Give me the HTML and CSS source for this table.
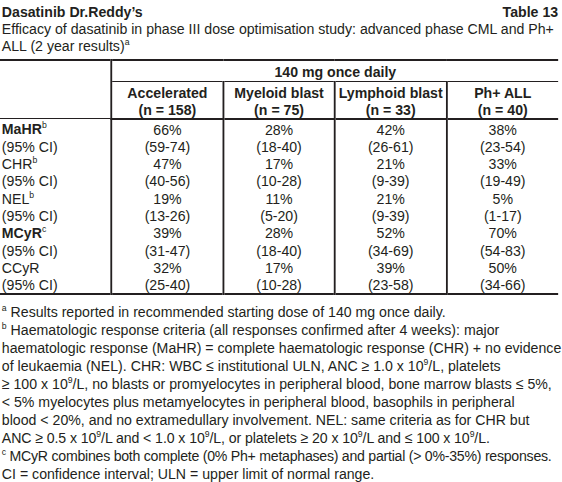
FILE: index.html
```html
<!DOCTYPE html>
<html>

<head>
	<title>Dasatinib Dr.Reddy's - Table 13</title>
	<meta charset="utf-8" />
	<link rel="stylesheet" href="styles.css">
</head>

<body>
	<div class="sheet">
		<div class="caption">
			<div class="caption-top">
				<span class="brand">Dasatinib Dr.Reddy’s</span>
				<span class="table-no">Table 13</span>
			</div>
			<p>Efficacy of dasatinib in phase III dose optimisation study: advanced phase CML and Ph+<br>ALL (2 year results)<sup>a</sup></p>
		</div>
		<table class="results">
			<thead>
				<tr class="dose-row">
					<th class="blank" rowspan="2"></th>
					<th colspan="4">140 mg once daily</th>
				</tr>
				<tr class="group-row">
					<th>Accelerated<br>(n = 158)</th>
					<th>Myeloid blast<br>(n = 75)</th>
					<th>Lymphoid blast<br>(n = 33)</th>
					<th>Ph+ ALL<br>(n = 40)</th>
				</tr>
			</thead>
			<tbody>
				<tr class="first">
					<td class="name"><b>MaHR</b><sup>b</sup></td>
					<td>66%</td>
					<td>28%</td>
					<td>42%</td>
					<td>38%</td>
				</tr>
				<tr>
					<td class="name">(95% CI)</td>
					<td>(59-74)</td>
					<td>(18-40)</td>
					<td>(26-61)</td>
					<td>(23-54)</td>
				</tr>
				<tr>
					<td class="name">CHR<sup>b</sup></td>
					<td>47%</td>
					<td>17%</td>
					<td>21%</td>
					<td>33%</td>
				</tr>
				<tr>
					<td class="name">(95% CI)</td>
					<td>(40-56)</td>
					<td>(10-28)</td>
					<td>(9-39)</td>
					<td>(19-49)</td>
				</tr>
				<tr>
					<td class="name">NEL<sup>b</sup></td>
					<td>19%</td>
					<td>11%</td>
					<td>21%</td>
					<td>5%</td>
				</tr>
				<tr>
					<td class="name">(95% CI)</td>
					<td>(13-26)</td>
					<td>(5-20)</td>
					<td>(9-39)</td>
					<td>(1-17)</td>
				</tr>
				<tr>
					<td class="name"><b>MCyR</b><sup>c</sup></td>
					<td>39%</td>
					<td>28%</td>
					<td>52%</td>
					<td>70%</td>
				</tr>
				<tr>
					<td class="name">(95% CI)</td>
					<td>(31-47)</td>
					<td>(18-40)</td>
					<td>(34-69)</td>
					<td>(54-83)</td>
				</tr>
				<tr>
					<td class="name">CCyR</td>
					<td>32%</td>
					<td>17%</td>
					<td>39%</td>
					<td>50%</td>
				</tr>
				<tr class="last">
					<td class="name">(95% CI)</td>
					<td>(25-40)</td>
					<td>(10-28)</td>
					<td>(23-58)</td>
					<td>(34-66)</td>
				</tr>
			</tbody>
		</table>
		<div class="notes">
			<p><sup>a</sup> Results reported in recommended starting dose of 140 mg once daily.</p>
			<p><sup>b</sup> Haematologic response criteria (all responses confirmed after 4 weeks): major<br>
				haematologic response (MaHR) = complete haematologic response (CHR) + no evidence<br>
				of leukaemia (NEL). CHR: WBC ≤ institutional ULN, ANC ≥ 1.0 x 10<sup>9</sup>/L, platelets<br>
				≥ 100 x 10<sup>9</sup>/L, no blasts or promyelocytes in peripheral blood, bone marrow blasts ≤ 5%,<br>
				&lt; 5% myelocytes plus metamyelocytes in peripheral blood, basophils in peripheral<br>
				blood &lt; 20%, and no extramedullary involvement. NEL: same criteria as for CHR but<br>
				<span class="tight">ANC ≥ 0.5 x 10<sup>9</sup>/L and &lt; 1.0 x 10<sup>9</sup>/L, or platelets ≥ 20 x 10<sup>9</sup>/L and ≤ 100 x 10<sup>9</sup>/L.</span></p>
			<p class="tighter"><sup>c</sup> MCyR combines both complete (0% Ph+ metaphases) and partial (&gt; 0%-35%) responses.</p>
			<p>CI = confidence interval; ULN = upper limit of normal range.</p>
		</div>
	</div>
</body>

</html>
```

FILE: styles.css
```css
/* general styles */
html,
body {
	overflow: hidden;
}

body {
	margin: 0;
	background: #fff;
	color: #231f20;
	font-family: "Liberation Sans", Arial, sans-serif;
	font-size: 15.5px;
}

* {
	box-sizing: border-box;
}

p {
	margin: 0;
}

sup {
	font-size: 9.5px;
	line-height: 0;
	vertical-align: 6px;
}

/* the print face is a condensed grotesque: narrow the whole sheet */
.sheet {
	width: 612px;
	transform: scaleX(0.912);
	transform-origin: 0 0;
}

/* caption */
.caption {
	padding: 3px 0 0 2px;
	line-height: 17px;
	margin-bottom: 5px;
}

.caption-top {
	display: flex;
	justify-content: space-between;
	font-weight: bold;
}

/* table */
.results {
	width: 100%;
	border-collapse: collapse;
	table-layout: fixed;
	border-top: 2px solid #231f20;
	border-bottom: 2px solid #231f20;
}

.results th,
.results td {
	padding: 0;
	text-align: center;
	white-space: nowrap;
	border-left: 2px solid #231f20;
}

.results th.blank,
.results td.name {
	border-left: none;
	text-align: left;
	padding-left: 2px;
}

.dose-row th {
	height: 21px;
	line-height: 17px;
	padding-top: 1px;
	border-bottom: 1px solid #231f20;
}

.group-row th {
	line-height: 17px;
	padding-top: 2px;
	border-bottom: 2px solid #231f20;
}

.results td {
	line-height: 17.3px;
}

.results tr.first td {
	padding-top: 1px;
}

/* footnotes */
.notes {
	margin-top: 8px;
	padding-left: 2px;
	line-height: 18px;
	white-space: nowrap;
}

.tight {
	letter-spacing: -0.1px;
}

.tighter {
	letter-spacing: -0.28px;
}
```
